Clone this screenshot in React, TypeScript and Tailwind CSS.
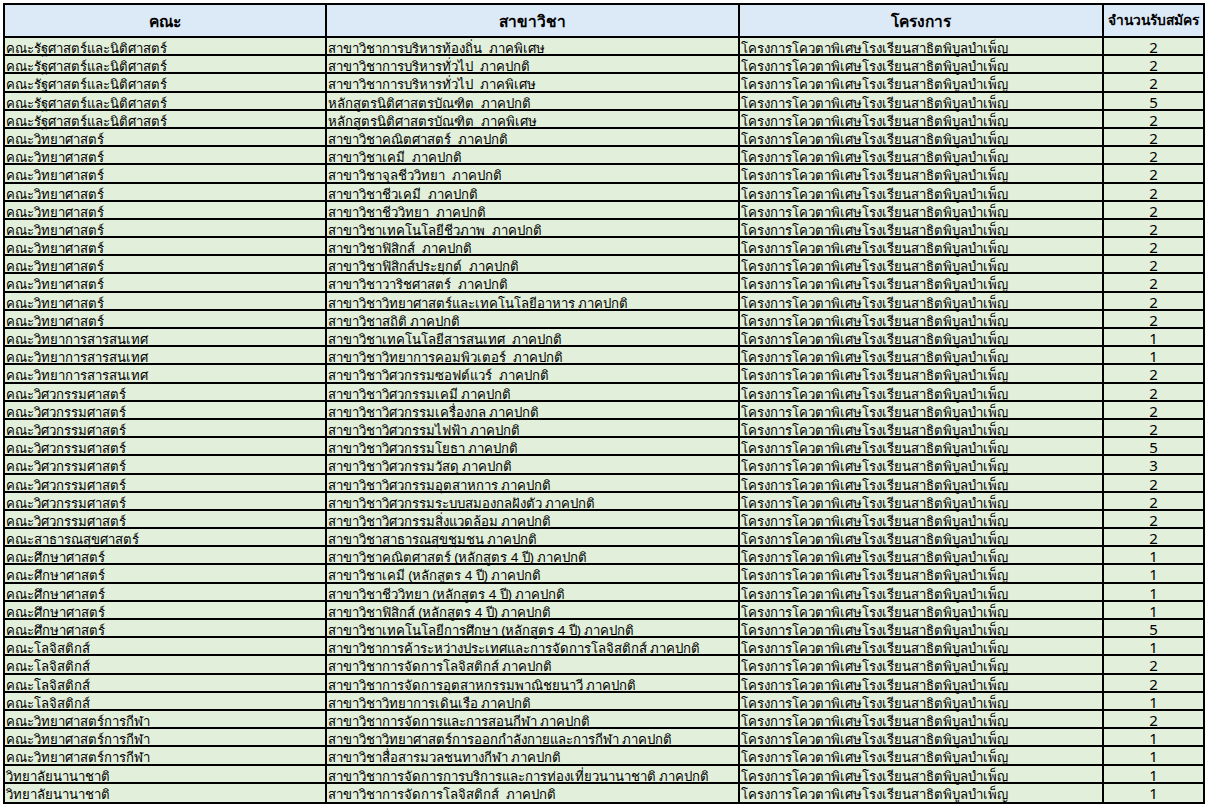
const rows: [string, string, number][] = [
  ["คณะรัฐศาสตร์และนิติศาสตร์", "สาขาวิชาการบริหารท้องถิ่น  ภาคพิเศษ", 2],
  ["คณะรัฐศาสตร์และนิติศาสตร์", "สาขาวิชาการบริหารทั่วไป  ภาคปกติ", 2],
  ["คณะรัฐศาสตร์และนิติศาสตร์", "สาขาวิชาการบริหารทั่วไป  ภาคพิเศษ", 2],
  ["คณะรัฐศาสตร์และนิติศาสตร์", "หลักสูตรนิติศาสตรบัณฑิต  ภาคปกติ", 5],
  ["คณะรัฐศาสตร์และนิติศาสตร์", "หลักสูตรนิติศาสตรบัณฑิต  ภาคพิเศษ", 2],
  ["คณะวิทยาศาสตร์", "สาขาวิชาคณิตศาสตร์  ภาคปกติ", 2],
  ["คณะวิทยาศาสตร์", "สาขาวิชาเคมี  ภาคปกติ", 2],
  ["คณะวิทยาศาสตร์", "สาขาวิชาจุลชีววิทยา  ภาคปกติ", 2],
  ["คณะวิทยาศาสตร์", "สาขาวิชาชีวเคมี  ภาคปกติ", 2],
  ["คณะวิทยาศาสตร์", "สาขาวิชาชีววิทยา  ภาคปกติ", 2],
  ["คณะวิทยาศาสตร์", "สาขาวิชาเทคโนโลยีชีวภาพ  ภาคปกติ", 2],
  ["คณะวิทยาศาสตร์", "สาขาวิชาฟิสิกส์  ภาคปกติ", 2],
  ["คณะวิทยาศาสตร์", "สาขาวิชาฟิสิกส์ประยุกต์  ภาคปกติ", 2],
  ["คณะวิทยาศาสตร์", "สาขาวิชาวาริชศาสตร์  ภาคปกติ", 2],
  ["คณะวิทยาศาสตร์", "สาขาวิชาวิทยาศาสตร์และเทคโนโลยีอาหาร ภาคปกติ", 2],
  ["คณะวิทยาศาสตร์", "สาขาวิชาสถิติ ภาคปกติ", 2],
  ["คณะวิทยาการสารสนเทศ", "สาขาวิชาเทคโนโลยีสารสนเทศ  ภาคปกติ", 1],
  ["คณะวิทยาการสารสนเทศ", "สาขาวิชาวิทยาการคอมพิวเตอร์  ภาคปกติ", 1],
  ["คณะวิทยาการสารสนเทศ", "สาขาวิชาวิศวกรรมซอฟต์แวร์  ภาคปกติ", 2],
  ["คณะวิศวกรรมศาสตร์", "สาขาวิชาวิศวกรรมเคมี ภาคปกติ", 2],
  ["คณะวิศวกรรมศาสตร์", "สาขาวิชาวิศวกรรมเครื่องกล ภาคปกติ", 2],
  ["คณะวิศวกรรมศาสตร์", "สาขาวิชาวิศวกรรมไฟฟ้า ภาคปกติ", 2],
  ["คณะวิศวกรรมศาสตร์", "สาขาวิชาวิศวกรรมโยธา ภาคปกติ", 5],
  ["คณะวิศวกรรมศาสตร์", "สาขาวิชาวิศวกรรมวัสดุ ภาคปกติ", 3],
  ["คณะวิศวกรรมศาสตร์", "สาขาวิชาวิศวกรรมอุตสาหการ ภาคปกติ", 2],
  ["คณะวิศวกรรมศาสตร์", "สาขาวิชาวิศวกรรมระบบสมองกลฝังตัว ภาคปกติ", 2],
  ["คณะวิศวกรรมศาสตร์", "สาขาวิชาวิศวกรรมสิ่งแวดล้อม ภาคปกติ", 2],
  ["คณะสาธารณสุขศาสตร์", "สาขาวิชาสาธารณสุขชุมชน ภาคปกติ", 2],
  ["คณะศึกษาศาสตร์", "สาขาวิชาคณิตศาสตร์ (หลักสูตร 4 ปี) ภาคปกติ", 1],
  ["คณะศึกษาศาสตร์", "สาขาวิชาเคมี (หลักสูตร 4 ปี) ภาคปกติ", 1],
  ["คณะศึกษาศาสตร์", "สาขาวิชาชีววิทยา (หลักสูตร 4 ปี) ภาคปกติ", 1],
  ["คณะศึกษาศาสตร์", "สาขาวิชาฟิสิกส์ (หลักสูตร 4 ปี) ภาคปกติ", 1],
  ["คณะศึกษาศาสตร์", "สาขาวิชาเทคโนโลยีการศึกษา (หลักสูตร 4 ปี) ภาคปกติ", 5],
  ["คณะโลจิสติกส์", "สาขาวิชาการค้าระหว่างประเทศและการจัดการโลจิสติกส์ ภาคปกติ", 1],
  ["คณะโลจิสติกส์", "สาขาวิชาการจัดการโลจิสติกส์ ภาคปกติ", 2],
  ["คณะโลจิสติกส์", "สาขาวิชาการจัดการอุตสาหกรรมพาณิชยนาวี ภาคปกติ", 2],
  ["คณะโลจิสติกส์", "สาขาวิชาวิทยาการเดินเรือ ภาคปกติ", 1],
  ["คณะวิทยาศาสตร์การกีฬา", "สาขาวิชาการจัดการและการสอนกีฬา ภาคปกติ", 2],
  ["คณะวิทยาศาสตร์การกีฬา", "สาขาวิชาวิทยาศาสตร์การออกกำลังกายและการกีฬา ภาคปกติ", 1],
  ["คณะวิทยาศาสตร์การกีฬา", "สาขาวิชาสื่อสารมวลชนทางกีฬา ภาคปกติ", 1],
  ["วิทยาลัยนานาชาติ", "สาขาวิชาการจัดการการบริการและการท่องเที่ยวนานาชาติ ภาคปกติ", 1],
  ["วิทยาลัยนานาชาติ", "สาขาวิชาการจัดการโลจิสติกส์  ภาคปกติ", 1],
];

const project = "โครงการโควตาพิเศษโรงเรียนสาธิตพิบูลบำเพ็ญ";
const cols = "grid grid-cols-[322px_413px_364px_99px]";

export default function App() {
  return (
    <div className="h-[806px] w-[1210px] overflow-hidden bg-white pl-[3px] pt-[3px] font-['Tahoma','Noto_Sans','Liberation_Sans',sans-serif] text-[13.2px] text-black">
      <div className="w-[1202px] border-2 border-black">
        <div className={`${cols} h-[33px] border-b-2 border-black bg-[#dce9f6] font-bold`}>
          <div className="flex items-center justify-center border-r-2 border-black pt-[2px] text-[15.5px]">คณะ</div>
          <div className="flex items-center justify-center border-r-2 border-black pt-[2px] text-[15.5px]">สาขาวิชา</div>
          <div className="flex items-center justify-center border-r-2 border-black pt-[2px] text-[15.5px]">โครงการ</div>
          <div className="flex items-center justify-center whitespace-nowrap text-[13.8px]">จำนวนรับสมัคร</div>
        </div>
        {rows.map(([faculty, major, seats], i) => (
          <div key={i} className={`${cols} h-[18.2px] border-b-2 border-black bg-[#e2efda] leading-[11px] last:border-b-0`}>
            <div className="whitespace-pre border-r-2 border-black pl-px pt-[5px]">{faculty}</div>
            <div className="whitespace-pre border-r-2 border-black pl-px pt-[5px]">{major}</div>
            <div className="whitespace-pre border-r-2 border-black pl-px pt-[5px]">{project}</div>
            <div className="pt-[4px] text-center text-[15px]">{seats}</div>
          </div>
        ))}
      </div>
    </div>
  );
}
